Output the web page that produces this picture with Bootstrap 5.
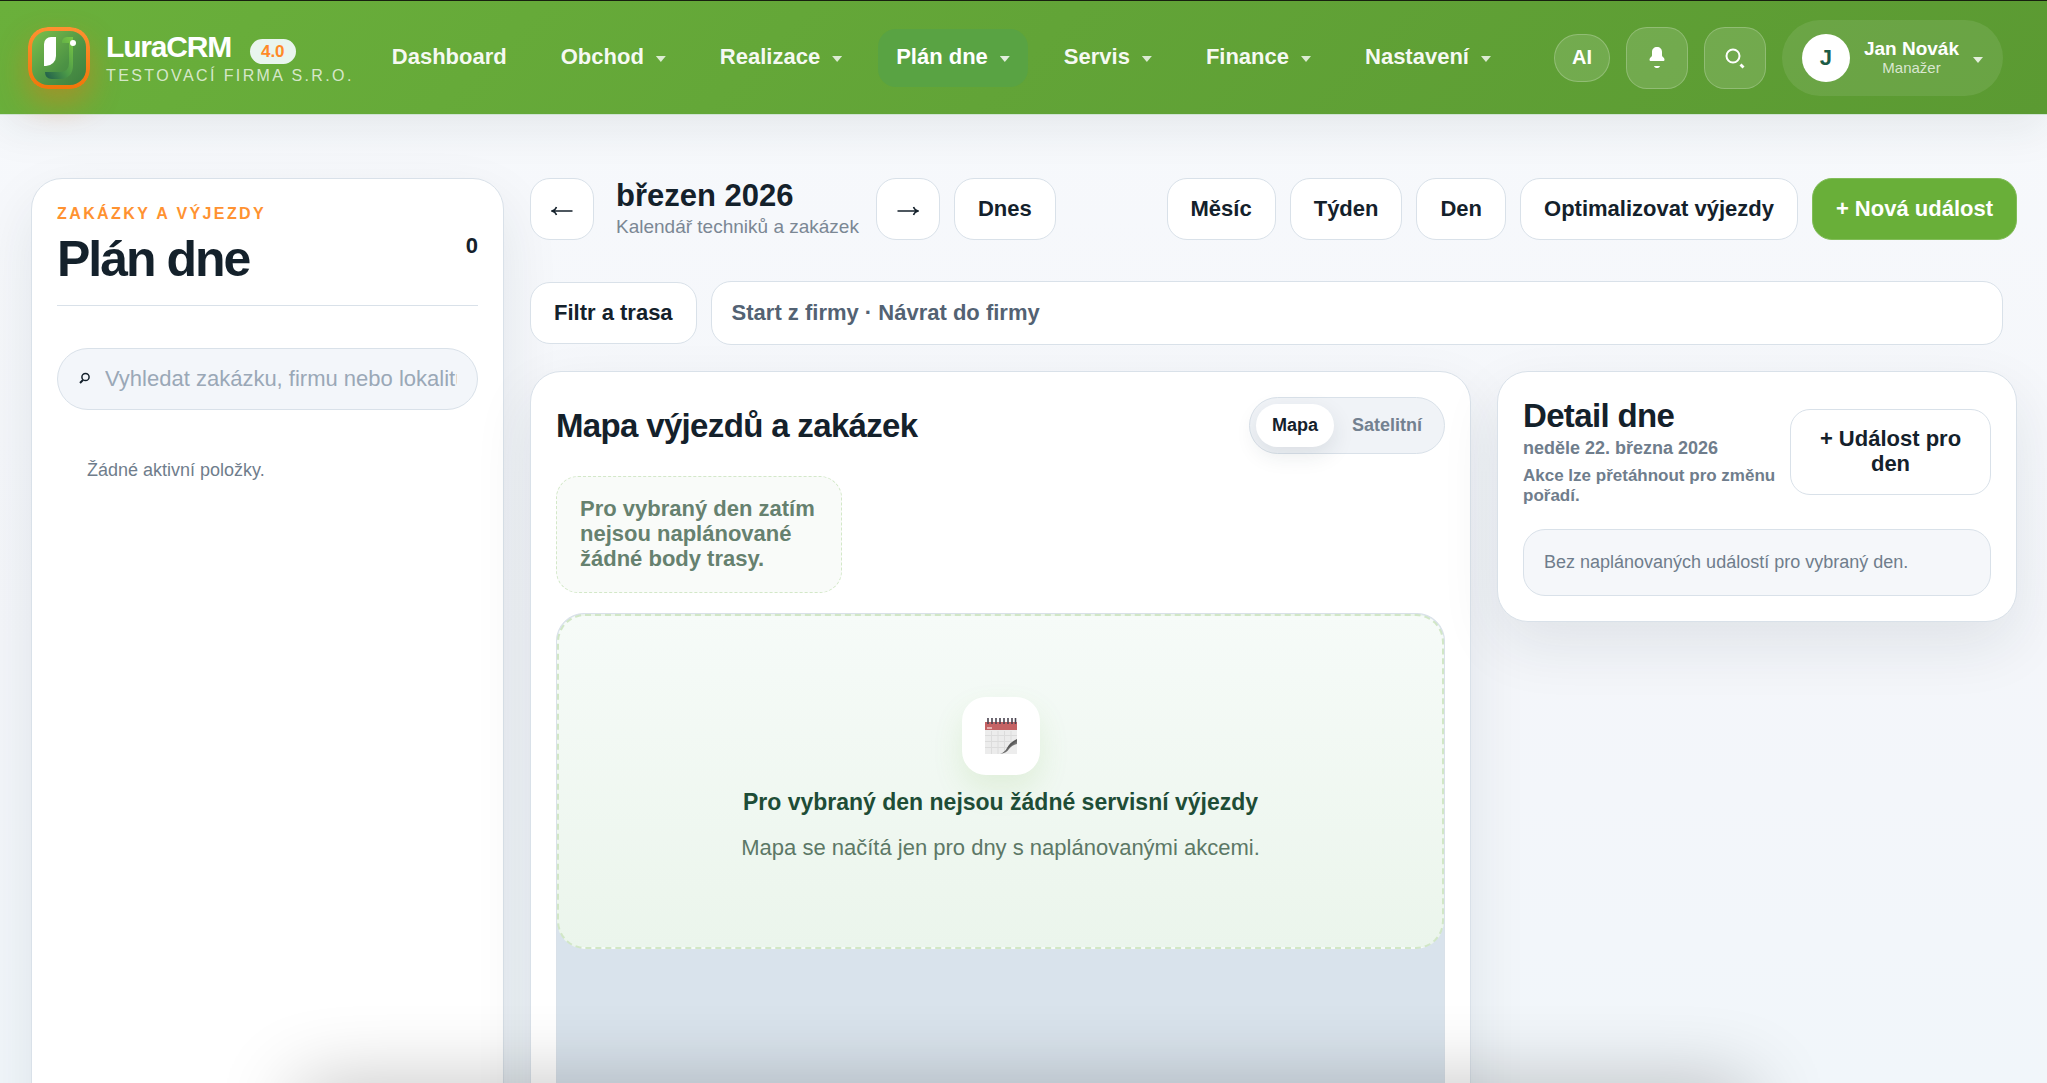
<!DOCTYPE html>
<html lang="cs">
<head>
<meta charset="utf-8">
<meta name="viewport" content="width=device-width, initial-scale=1">
<title>LuraCRM – Plán dne</title>
<link href="https://cdn.jsdelivr.net/npm/bootstrap@5.3.0/dist/css/bootstrap.min.css" rel="stylesheet">
<style>
:root { --ink:#14212b; --muted-ink:#6f7d8c; --line:#d9e1e9; --brand:#69af39; }
body { font-family:"Liberation Sans",Arial,sans-serif; font-size:22px; line-height:25px; color:var(--ink);
  background:linear-gradient(180deg,#f7f9fc,#f4f6fa 60%,#f1f6fa); }
/* top bar */
.topbar { height:115px; flex:none; padding:0 44px 0 28px; border-top:1px solid #17200f; border-bottom:1px solid #cfe3d4;
  background:linear-gradient(135deg,#6ab03b,#62a437 50%,#5b9a32); box-shadow:0 14px 44px rgba(20,50,45,.08); position:relative; z-index:2; }
.brand { gap:16px; color:#fff; margin-right:20px; }
.brand-mark { width:62px; height:62px; border-radius:20px; box-shadow:0 14px 30px rgba(240,110,20,.42); }
.brand-text { gap:3px; }
.brand-title { gap:19px; }
.brand-name { font-size:30px; line-height:32px; font-weight:700; letter-spacing:-.04em; }
.brand-sub { font-size:16px; line-height:18px; letter-spacing:.15em; color:rgba(255,255,255,.74); }
.version { font-size:17px; line-height:25px; font-weight:700; color:#ff8a27; background:#e9f5ee; padding:0 11px; border-radius:13px; margin-top:8px; }
.main-nav { gap:18px; }
.main-nav a { color:rgba(255,255,255,.95); font-weight:700; padding:0 18px 2px; height:58px; border-radius:18px; gap:12px; text-decoration:none; }
.main-nav a.active { background:#59a343; color:#fff; }
.caret { width:10px; height:6px; background:currentColor; opacity:.82; clip-path:polygon(0 0,100% 0,50% 100%); margin-top:5px; }
.round-btn { border:1px solid rgba(255,255,255,.22); background:rgba(255,255,255,.13); color:#fff; border-radius:21px; width:62px; height:62px; padding:0; }
.ai-btn { width:56px; height:48px; border-radius:24px; font-size:20px; font-weight:700; }
.profile { height:76px; border:0; border-radius:38px; background:rgba(255,255,255,.09); color:#fff; padding:0 20px; gap:14px; }
.avatar { width:48px; height:48px; border-radius:50%; background:#fff; color:#1d5b46; font-weight:700; }
.p-name { font-size:19px; line-height:20px; font-weight:700; }
.p-role { font-size:15px; line-height:18px; color:rgba(255,255,255,.75); }
/* page */
.page { padding:63px 30px 0 31px; gap:26px; }
.panel { background:#fff; border:1px solid var(--line); border-radius:31px; padding:25px; box-shadow:0 24px 60px rgba(25,45,60,.09); }
.side { width:473px; flex:none; min-height:100vh; }
.side-head { border-bottom:1px solid var(--line); padding-bottom:18px; margin-bottom:42px; }
.eyebrow { font-size:16px; line-height:20px; font-weight:700; letter-spacing:.15em; color:#ff9231; margin-bottom:8px; }
.side h1 { font-size:50px; line-height:55px; font-weight:700; letter-spacing:-.04em; margin:0; }
.finder { height:62px; border:1px solid var(--line); border-radius:31px; background:#f3f6fa; padding:0 20px 2px 21px; gap:15px; }
.finder input { border:0; background:none; outline:0; padding:0; min-width:0; color:var(--ink); }
.finder input::placeholder { color:#9aa8b7; opacity:1; }
.small-note { font-size:18px; line-height:21px; color:var(--muted-ink); }
.side .small-note { padding:0 30px; margin:50px 0 0; }
.soft-btn { background:#fff; border:1px solid var(--line); border-radius:20px; color:var(--ink); font-weight:700; min-height:62px; padding:0 23px 2px; }
.soft-btn.arrow { width:64px; padding:0; }
.soft-btn.primary { background:var(--brand); border-color:#82bd59; color:#fff; }
.tools { gap:14px; }
.month { padding:0 3px 0 8px; }
.month h2 { font-size:31px; line-height:36px; font-weight:700; margin:0; }
.month p { font-size:19px; line-height:26px; color:#7b8794; margin:0; }
.route-row { margin:41px 14px 26px 0; gap:14px; }
.route-info { background:#fff; border:1px solid var(--line); border-radius:20px; height:64px; padding:0 20px 2px; color:#536273; font-weight:700; }
.day-cols { gap:26px; }
.detail-col { width:520px; flex:none; }
.panel h2.ptitle { font-size:33px; line-height:38px; font-weight:700; letter-spacing:-.02em; margin:0; }
.map-panel { min-height:100vh; }
.segment { height:57px; border:1px solid var(--line); border-radius:29px; background:#f0f3f7; padding:6px; gap:2px; }
.segment button { border:0; background:none; font-size:18px; font-weight:700; border-radius:22px; padding:0 16px; color:#738190; }
.segment button.on { background:#fff; color:var(--ink); box-shadow:0 8px 22px rgba(25,45,60,.1); }
.hint { max-width:286px; border:1px dashed #d3e8c8; border-radius:22px; background:#f9fbf9; color:#66816f; font-weight:700; padding:19px 23px 21px; margin:22px 0 20px; }
.map-area { border:1px solid var(--line); background:#d9e3ec; border-radius:28px 28px 0 0; height:100vh; }
.map-empty { height:335px; padding-bottom:6px; border:2px dashed #d1e7c6; border-radius:28px; background:linear-gradient(180deg,#f6fbf8,#ebf5ec); }
.tile { width:78px; height:78px; border-radius:24px; background:#fff; box-shadow:0 14px 30px rgba(105,175,57,.13); margin-bottom:14px; }
.map-empty strong { font-size:23px; line-height:27px; color:#1e4d36; margin-bottom:19px; }
.map-empty p { color:#5c7866; margin:0; }
.detail-head { gap:12px; margin-bottom:23px; }
.day-name { font-size:18px; line-height:21px; font-weight:700; color:var(--muted-ink); margin:3px 0 7px; }
.day-help { font-size:17px; line-height:20px; font-weight:700; color:var(--muted-ink); margin:0; }
.detail-head .soft-btn { width:201px; flex:none; min-height:86px; }
.nothing { border:1px solid var(--line); border-radius:22px; background:#f5f7fa; padding:22px 20px; }
/* shade cast along the lower window edge */
.edge-shade { position:fixed; z-index:5; left:15%; right:15%; bottom:-54px; height:40px; box-shadow:0 0 80px 8px rgba(0,0,0,.3); pointer-events:none; }
</style>
<script src="https://cdn.jsdelivr.net/npm/bootstrap@5.3.0/dist/js/bootstrap.bundle.min.js"></script>
</head>
<body>
<div class="vh-100 overflow-hidden d-flex flex-column">
  <header class="topbar d-flex align-items-center">
    <a href="#" class="brand d-flex align-items-center text-decoration-none">
      <svg class="brand-mark" viewBox="0 0 62 62" aria-hidden="true">
        <defs>
          <linearGradient id="ring" x1="0" y1="0" x2="0" y2="1"><stop offset="0" stop-color="#ff9131"/><stop offset="1" stop-color="#f0760a"/></linearGradient>
          <linearGradient id="leaf" x1="0" y1="0" x2="1" y2="1"><stop offset="0" stop-color="#7cc04a"/><stop offset=".6" stop-color="#4d9345"/><stop offset="1" stop-color="#3c7e3f"/></linearGradient>
          <linearGradient id="hook" x1="1" y1="0" x2="0" y2="1"><stop offset="0" stop-color="#7bc945"/><stop offset=".55" stop-color="#4a9748"/><stop offset="1" stop-color="#1f5c4c"/></linearGradient>
        </defs>
        <rect width="62" height="62" rx="20" fill="url(#ring)"/>
        <rect x="4" y="4" width="54" height="54" rx="16" fill="url(#leaf)"/>
        <path d="M34 16a5 5 0 0 1 5-6h6v28q0 14-14 14h-7q-7 0-7-7h15q9 0 9-9V16z" fill="url(#hook)"/>
        <path d="M23 10h5v19a10 10 0 0 1-10 10h-2V17a7 7 0 0 1 7-7z" fill="#fff"/>
        <circle cx="45" cy="16" r="3" fill="#fff"/>
      </svg>
      <span class="brand-text d-flex flex-column">
        <span class="brand-title d-flex align-items-center"><span class="brand-name">LuraCRM</span><span class="version">4.0</span></span>
        <span class="brand-sub">TESTOVACÍ FIRMA S.R.O.</span>
      </span>
    </a>
    <nav class="main-nav d-flex">
      <a href="#" class="d-flex align-items-center">Dashboard</a>
      <a href="#" class="d-flex align-items-center">Obchod<span class="caret"></span></a>
      <a href="#" class="d-flex align-items-center">Realizace<span class="caret"></span></a>
      <a href="#" class="d-flex align-items-center active" aria-current="page">Plán dne<span class="caret"></span></a>
      <a href="#" class="d-flex align-items-center">Servis<span class="caret"></span></a>
      <a href="#" class="d-flex align-items-center">Finance<span class="caret"></span></a>
      <a href="#" class="d-flex align-items-center">Nastavení<span class="caret"></span></a>
    </nav>
    <div class="d-flex align-items-center gap-3 ms-auto">
      <button type="button" class="round-btn ai-btn">AI</button>
      <button type="button" class="round-btn d-flex align-items-center justify-content-center" aria-label="Upozornění">
        <svg width="16" height="22" viewBox="0 0 16 22" fill="#fff"><path d="M8 0c3 0 5 2 5 5v3.500c0 1.500 2.500 2 2.500 4 0 1-.5 1.500-1.500 1.500H2C1 14 .5 13.500.5 12.500c0-2 2.500-2.500 2.500-4V5c0-3 2-5 5-5zM5 19h6c-.5 1.500-1.500 2-3 2s-2.500-.5-3-2z"/></svg>
      </button>
      <button type="button" class="round-btn d-flex align-items-center justify-content-center" aria-label="Hledat">
        <svg width="20" height="22" viewBox="0 0 20 22" fill="none" stroke="#fff"><circle cx="8" cy="9" r="6.500" stroke-width="2"/><path d="M15.500 17.500l3 3" stroke-width="2.800"/></svg>
      </button>
      <button type="button" class="profile d-flex align-items-center">
        <span class="avatar d-flex align-items-center justify-content-center">J</span>
        <span class="d-flex flex-column"><span class="p-name">Jan Novák</span><span class="p-role">Manažer</span></span>
        <span class="caret"></span>
      </button>
    </div>
  </header>

  <main class="page d-flex flex-grow-1 align-items-start">
    <aside class="panel side">
      <div class="side-head d-flex align-items-center justify-content-between">
        <div><div class="eyebrow">ZAKÁZKY A VÝJEZDY</div><h1>Plán dne</h1></div>
        <strong>0</strong>
      </div>
      <label class="finder d-flex align-items-center">
        <svg width="11" height="12" viewBox="0 0 11 12" fill="none" stroke="#14212b" aria-hidden="true"><circle cx="6.500" cy="5" r="3.600" stroke-width="1.500"/><path d="M4 8L1 11" stroke-width="2"/></svg>
        <input type="text" class="flex-grow-1" placeholder="Vyhledat zakázku, firmu nebo lokalitu" aria-label="Vyhledat">
      </label>
      <p class="small-note">Žádné aktivní položky.</p>
    </aside>

    <section class="flex-grow-1">
      <div class="tools d-flex align-items-center">
        <button type="button" class="soft-btn arrow" aria-label="Předchozí měsíc"><svg width="22" height="12" viewBox="0 0 22 12" fill="none" stroke="#14212b" stroke-width="1.500"><path d="M21.500 6H2M5.500 2Q4.500 5 1 6q3.500 1 4.500 4"/></svg></button>
        <div class="month"><h2>březen 2026</h2><p>Kalendář techniků a zakázek</p></div>
        <button type="button" class="soft-btn arrow" aria-label="Další měsíc"><svg width="22" height="12" viewBox="0 0 22 12" fill="none" stroke="#14212b" stroke-width="1.500"><path d="M.5 6H20M16.500 2Q17.500 5 21 6q-3.500 1-4.500 4"/></svg></button>
        <button type="button" class="soft-btn">Dnes</button>
        <div class="tools d-flex ms-auto">
          <button type="button" class="soft-btn">Měsíc</button>
          <button type="button" class="soft-btn">Týden</button>
          <button type="button" class="soft-btn">Den</button>
          <button type="button" class="soft-btn">Optimalizovat výjezdy</button>
          <button type="button" class="soft-btn primary">+ Nová událost</button>
        </div>
      </div>
      <div class="route-row d-flex align-items-center">
        <button type="button" class="soft-btn">Filtr a trasa</button>
        <div class="route-info flex-grow-1 d-flex align-items-center">Start z firmy · Návrat do firmy</div>
      </div>
      <div class="day-cols d-flex align-items-start">
        <div class="panel map-panel flex-grow-1">
          <div class="d-flex align-items-center justify-content-between">
            <h2 class="ptitle">Mapa výjezdů a zakázek</h2>
            <div class="segment d-flex"><button type="button" class="on">Mapa</button><button type="button">Satelitní</button></div>
          </div>
          <div class="hint">Pro vybraný den zatím nejsou naplánované žádné body trasy.</div>
          <div class="map-area">
            <div class="map-empty d-flex flex-column align-items-center justify-content-center">
              <div class="tile d-flex align-items-center justify-content-center">
                <svg width="34" height="38" viewBox="0 0 34 38" aria-hidden="true">
                  <defs><linearGradient id="curl" x1="0" y1="0" x2="1" y2="1"><stop offset="0" stop-color="#ddd"/><stop offset=".5" stop-color="#555"/><stop offset="1" stop-color="#eee"/></linearGradient></defs>
                  <path d="M1 5h32v32H1z" fill="#ececec"/>
                  <path d="M1 18.500h32M1 24.500h32M1 30.500h32M7.500 14v23M14 14v23M20.500 14v23M27 14v23" stroke="#dcdcdc" stroke-width="1"/>
                  <path d="M1 5h32v8H1z" fill="#c46264"/>
                  <path d="M3 11h5" stroke="#e6b0b0" stroke-width="2"/>
                  <path d="M17 37q6-2 8-7 2-5 8-8v15z" fill="#ededed"/>
                  <path d="M16 37q5-2 7-6 3-6 10-9v5q-5 1-8 5-2 4-9 5z" fill="url(#curl)"/>
                  <path d="M4 1v6M8 1v6M12 1v6M16 1v6M20 1v6M24 1v6M28 1v6M31.500 1v6" stroke="#4a4450" stroke-width="1.600"/>
                </svg>
              </div>
              <strong>Pro vybraný den nejsou žádné servisní výjezdy</strong>
              <p>Mapa se načítá jen pro dny s naplánovanými akcemi.</p>
            </div>
          </div>
        </div>
        <div class="panel detail-col">
          <div class="detail-head d-flex align-items-center">
            <div class="flex-grow-1">
              <h2 class="ptitle">Detail dne</h2>
              <p class="day-name">neděle 22. března 2026</p>
              <p class="day-help">Akce lze přetáhnout pro změnu pořadí.</p>
            </div>
            <button type="button" class="soft-btn">+ Událost pro den</button>
          </div>
          <div class="nothing small-note">Bez naplánovaných událostí pro vybraný den.</div>
        </div>
      </div>
    </section>
  </main>
</div>
<div class="edge-shade"></div>
</body>
</html>
